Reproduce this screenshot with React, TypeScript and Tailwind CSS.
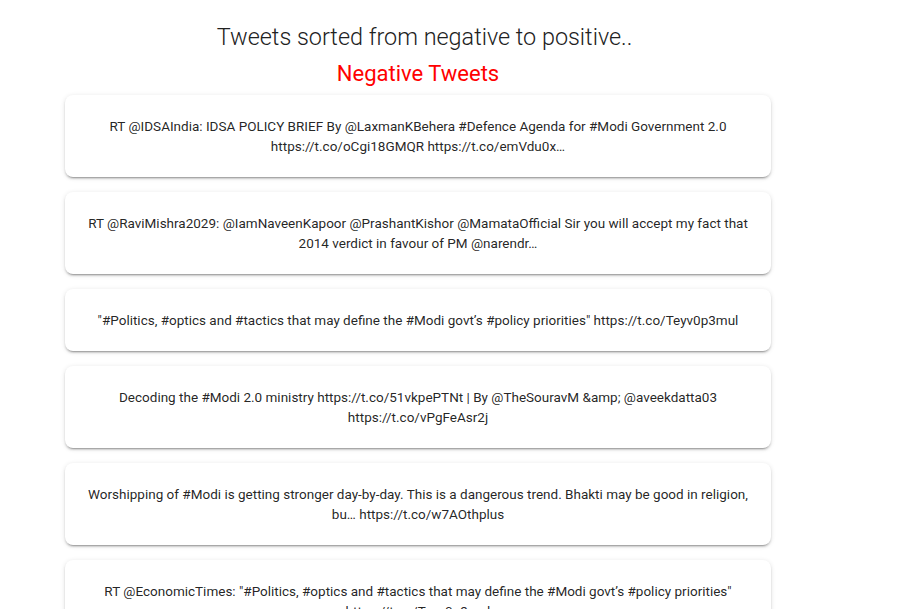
import React from "react";

const tweets: string[] = [
  "RT @IDSAIndia: IDSA POLICY BRIEF By @LaxmanKBehera #Defence Agenda for #Modi Government 2.0 https://t.co/oCgi18GMQR https://t.co/emVdu0x…",
  "RT @RaviMishra2029: @IamNaveenKapoor @PrashantKishor @MamataOfficial Sir you will accept my fact that 2014 verdict in favour of PM @narendr…",
  "\"#Politics, #optics and #tactics that may define the #Modi govt’s #policy priorities\" https://t.co/Teyv0p3mul",
  "Decoding the #Modi 2.0 ministry https://t.co/51vkpePTNt | By @TheSouravM &amp; @aveekdatta03 https://t.co/vPgFeAsr2j",
  "Worshipping of #Modi is getting stronger day-by-day. This is a dangerous trend. Bhakti may be good in religion, bu… https://t.co/w7AOthplus",
  "RT @EconomicTimes: \"#Politics, #optics and #tactics that may define the #Modi govt’s #policy priorities\" https://t.co/Teyv0p3mul",
];

export default function App() {
  return (
    <div
      className="h-[609px] overflow-hidden bg-white"
      style={{ fontFamily: "Roboto, 'Liberation Sans', sans-serif" }}
    >
      <div className="ml-[65px] w-[706px] pt-[21px]">
        <h1 className="pl-[13px] text-center text-[23.4px] font-light leading-[32px] text-[#212121]">
          Tweets sorted from negative to positive..
        </h1>
        <h2 className="mt-[6px] text-center text-[22px] font-normal leading-[30px] text-[#ff0000]">
          Negative Tweets
        </h2>
        <div className="mt-[6px] flex flex-col gap-[15px]">
          {tweets.map((t, i) => (
            <div
              key={i}
              className="rounded-[8px] bg-white px-[20px] py-[21px] text-center text-[13.5px] leading-[20px] text-[rgba(0,0,0,0.87)] shadow-[0px_3px_1px_-2px_rgba(0,0,0,0.2),0px_2px_2px_0px_rgba(0,0,0,0.14),0px_1px_5px_0px_rgba(0,0,0,0.12)]"
            >
              {t}
            </div>
          ))}
        </div>
      </div>
    </div>
  );
}
